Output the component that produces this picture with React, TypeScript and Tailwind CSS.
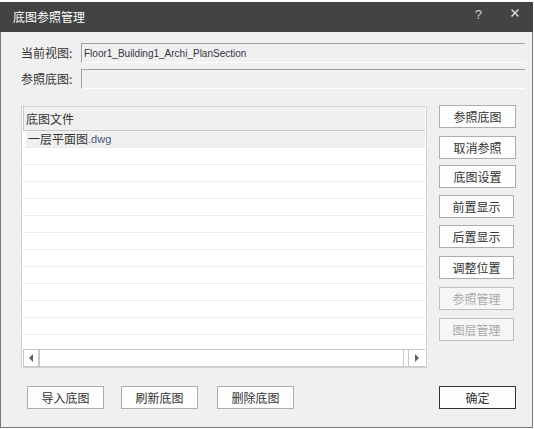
import React from "react";

const cjk = "font-['Noto_Sans_CJK_SC',sans-serif]";

function Btn({ label, w = 77, mt = 0, disabled = false, primary = false }: { label: string; w?: number; mt?: number; disabled?: boolean; primary?: boolean }) {
  const base = "h-[23px] flex items-center justify-center text-[12px] leading-none border shrink-0";
  const style: React.CSSProperties = { width: w, marginTop: mt };
  let cls = "border-[#adadad] bg-[#fdfdfd] text-[#333333]";
  if (disabled) cls = "border-[#bfbfbf] bg-[#f6f6f6] text-[#a8a8a8]";
  if (primary) cls = "border-[#333333] bg-[#fdfdfd] text-[#333333]";
  return (
    <div className={`${base} ${cls}`} style={style}>
      {label}
    </div>
  );
}

export default function App() {
  const rows = Array.from({ length: 13 });
  const sideButtons: { label: string; mt: number; w: number; disabled?: boolean }[] = [
    { label: "参照底图", mt: 0, w: 77 },
    { label: "取消参照", mt: 8, w: 77 },
    { label: "底图设置", mt: 6, w: 77 },
    { label: "前置显示", mt: 7, w: 75 },
    { label: "后置显示", mt: 7, w: 75 },
    { label: "调整位置", mt: 8, w: 75 },
    { label: "参照管理", mt: 8, w: 75, disabled: true },
    { label: "图层管理", mt: 8, w: 75, disabled: true },
  ];
  return (
    <div className={`w-[534px] h-[429px] bg-white overflow-hidden ${cjk}`}>
      <div className="w-[533px] mt-[2px] flex flex-col">
        {/* Title bar */}
        <div className="h-[30px] bg-[#434343] flex items-start">
          <div className="pl-[13px] h-[30px] flex items-center text-[12px] text-white leading-none">底图参照管理</div>
          <div className="ml-auto flex items-start pt-[5px] pr-[14px]">
            <span className="text-[13px] leading-none text-[#d0d0d0] font-['Liberation_Sans',sans-serif] mt-[1px]">?</span>
            <svg width="8" height="8" viewBox="0 0 8 8" className="ml-[29px] mt-[2px]">
              <path d="M0.5 0.5 L7.5 7.5 M7.5 0.5 L0.5 7.5" stroke="#d8d8d8" strokeWidth="1.5" />
            </svg>
          </div>
        </div>
        {/* Body */}
        <div className="h-[396px] bg-[#f0f0f0] border-l border-r border-b border-[#7a7a7a] flex flex-col">
          <div className="mt-[11px] flex items-center h-[20px] pl-[20px]">
            <div className="w-[60px] text-[12px] text-[#333333] leading-none">当前视图:</div>
            <div className="w-[444px] h-[20px] border-t border-l border-[#a0a0a0] border-b border-b-white flex items-center pl-[2px] text-[10px] text-[#333344] font-['Liberation_Sans',sans-serif]">
              Floor1_Building1_Archi_PlanSection
            </div>
          </div>
          <div className="mt-[6px] flex items-center h-[20px] pl-[20px]">
            <div className="w-[60px] text-[12px] text-[#333333] leading-none">参照底图:</div>
            <div className="w-[444px] h-[20px] border-t border-l border-[#a0a0a0] border-b border-b-white"></div>
          </div>
          {/* Main area */}
          <div className="mt-[16px] flex items-start pl-[20px] h-[263px]">
            <div className="mt-[1px] w-[406px] h-[262px] border border-[#d2d2d2] bg-white px-px flex flex-col">
              <div className="h-[24px] shrink-0 bg-[#f0f0f0] border-l border-b border-[#c8c8c8] flex items-center pl-[2px] text-[12px] text-[#333333]">
                底图文件
              </div>
              <div className="flex-1 overflow-hidden flex flex-col">
                {rows.map((_, i) => (
                  <div key={i} className="h-[17px] shrink-0 border-b border-[#ececec] flex">
                    {i === 0 ? (
                      <div className="ml-[3px] flex-1 bg-[#f0f0f0] flex items-center pl-[2px] text-[12px] text-[#333333] leading-none">
                        一层平面图<span className="font-['Liberation_Sans',sans-serif] text-[11px] text-[#4a5876]">.dwg</span>
                      </div>
                    ) : null}
                  </div>
                ))}
              </div>
              <div className="h-[18px] shrink-0 border-t border-b border-[#c8c8c8] bg-white flex">
                <div className="w-[17px] border-l border-r-2 border-[#c8c8c8] flex items-center justify-center">
                  <div className="w-0 h-0 border-y-[4px] border-y-transparent border-r-[4px] border-r-[#606060]"></div>
                </div>
                <div className="flex-1 border-r border-[#c8c8c8]"></div>
                <div className="ml-[4px] w-[17px] border-l border-[#c8c8c8] flex items-center justify-center">
                  <div className="w-0 h-0 border-y-[4px] border-y-transparent border-l-[4px] border-l-[#606060]"></div>
                </div>
              </div>
            </div>
            <div className="ml-[12px] flex flex-col">
              {sideButtons.map((b) => (
                <Btn key={b.label} label={b.label} mt={b.mt} w={b.w} disabled={b.disabled} />
              ))}
            </div>
          </div>
          {/* Bottom buttons */}
          <div className="mt-[18px] flex items-start pl-[26px] pr-[16px]">
            <Btn label="导入底图" />
            <div className="ml-[17px]"><Btn label="刷新底图" /></div>
            <div className="ml-[19px]"><Btn label="删除底图" /></div>
            <div className="ml-auto"><Btn label="确定" primary /></div>
          </div>
        </div>
      </div>
    </div>
  );
}
